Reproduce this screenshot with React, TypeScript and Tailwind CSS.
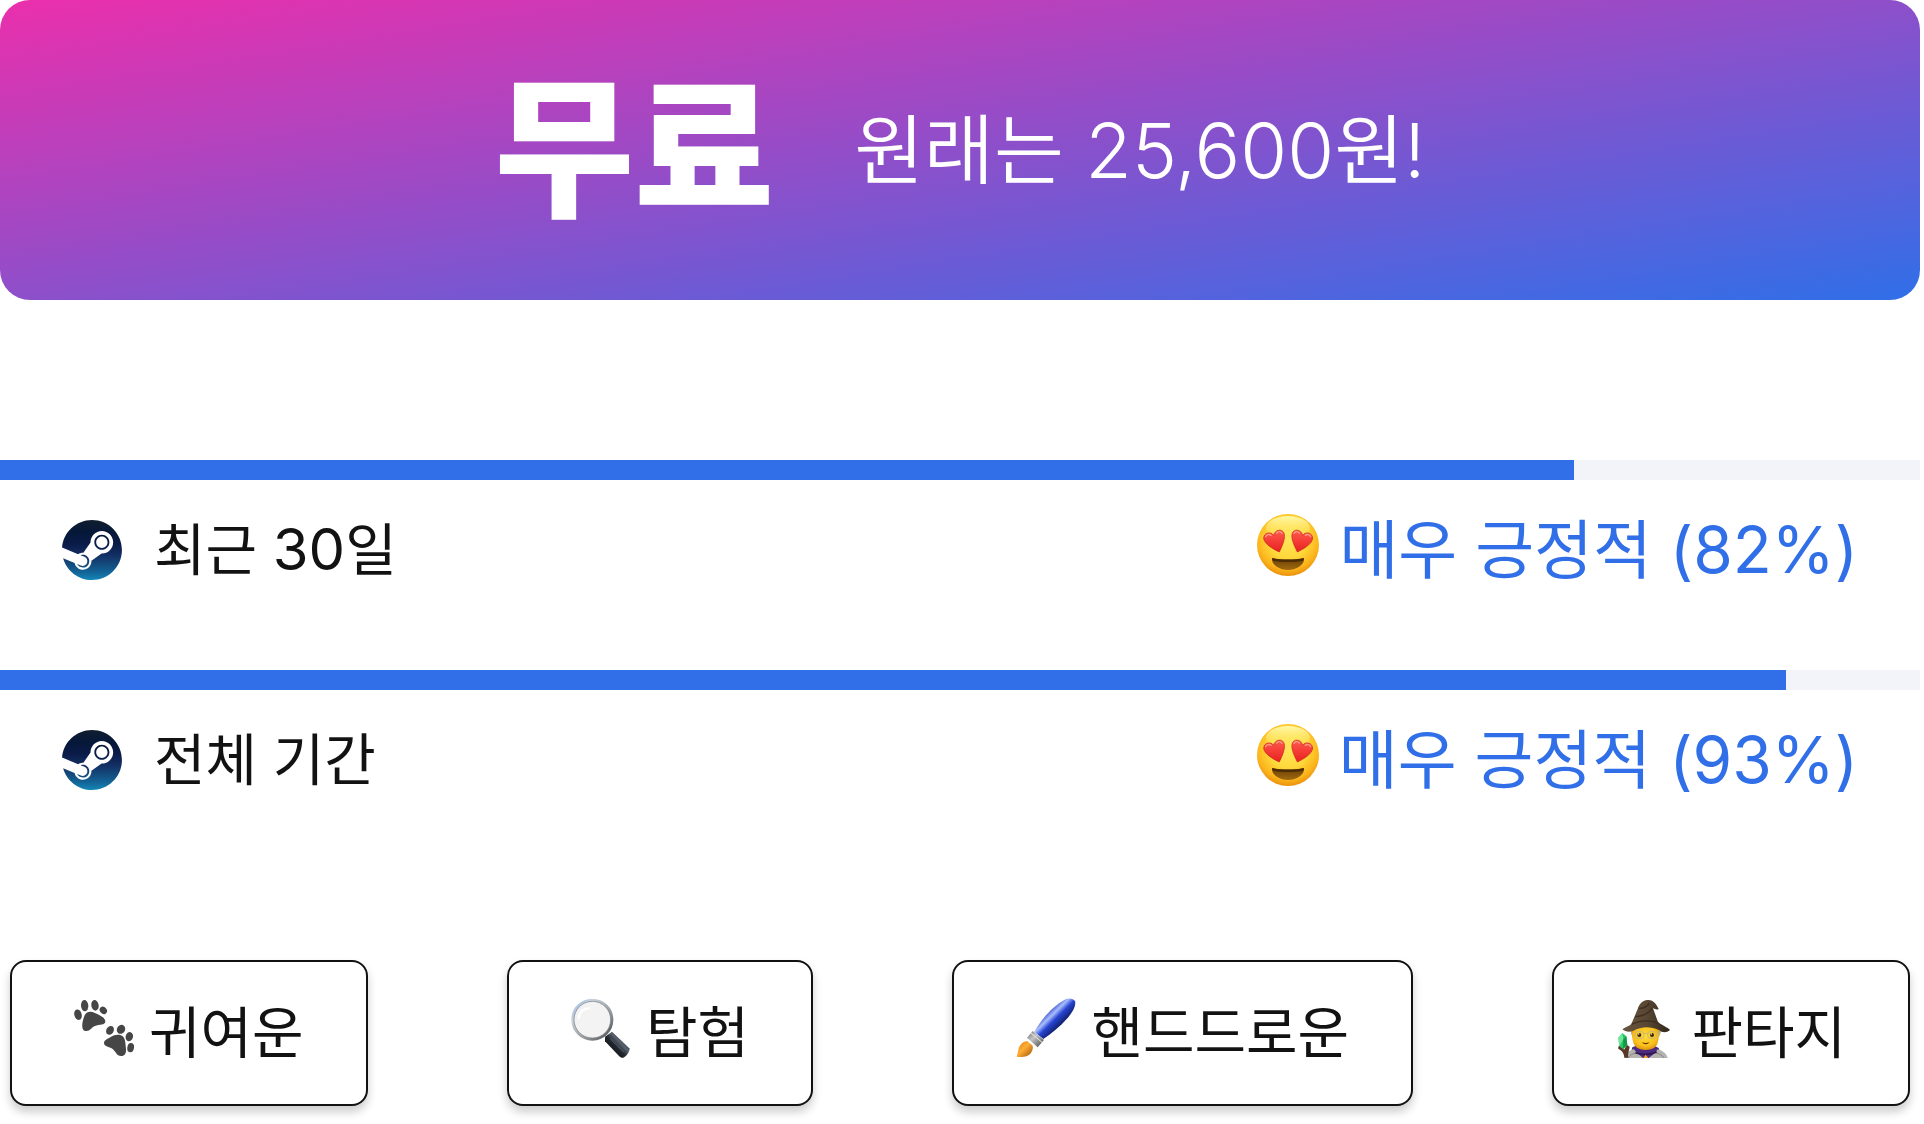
import type { ReactNode } from 'react';

type Review = { id: string; label: ReactNode; score: number };
type Tag = { name: string; icon: ReactNode };

function SteamIcon({ id }: { id: string }) {
  return (
    <svg viewBox="0 0 24 24" className="size-15 shrink-0" aria-hidden="true">
      <defs>
        <linearGradient id={id} x1="0" y1="0" x2="0" y2="1">
          <stop offset="0" stopColor="#111d2e" />
          <stop offset="0.21" stopColor="#051839" />
          <stop offset="0.4" stopColor="#0a1b48" />
          <stop offset="0.58" stopColor="#132e62" />
          <stop offset="0.74" stopColor="#144b7e" />
          <stop offset="0.87" stopColor="#136497" />
          <stop offset="1" stopColor="#1387b8" />
        </linearGradient>
      </defs>
      <path
        fill={`url(#${id})`}
        d="M11.979 0C5.678 0 .511 4.86.022 11.037l6.432 2.658c.545-.371 1.203-.59 1.912-.59.063 0 .125.004.188.006l2.861-4.142V8.91c0-2.495 2.028-4.524 4.524-4.524 2.494 0 4.524 2.031 4.524 4.527s-2.03 4.525-4.524 4.525h-.105l-4.076 2.911c0 .052.004.105.004.159 0 1.875-1.515 3.396-3.39 3.396-1.635 0-3.016-1.173-3.331-2.727L.436 15.27C1.862 20.307 6.486 24 11.979 24c6.627 0 11.999-5.373 11.999-12S18.605 0 11.979 0zM7.54 18.21l-1.473-.61c.262.543.714.999 1.314 1.25 1.297.539 2.793-.076 3.332-1.375.263-.63.264-1.319.005-1.949s-.75-1.121-1.377-1.383c-.624-.26-1.29-.249-1.878-.03l1.523.63c.956.4 1.409 1.5 1.009 2.455-.397.957-1.497 1.41-2.454 1.012H7.54zm11.415-9.303c0-1.662-1.353-3.015-3.015-3.015-1.665 0-3.015 1.353-3.015 3.015 0 1.665 1.35 3.015 3.015 3.015 1.663 0 3.015-1.35 3.015-3.015zm-5.273-.005c0-1.252 1.013-2.266 2.265-2.266 1.249 0 2.266 1.014 2.266 2.266 0 1.251-1.017 2.265-2.266 2.265-1.253 0-2.265-1.014-2.265-2.265z"
      />
    </svg>
  );
}

function HeartEyesIcon({ id }: { id: string }) {
  return (
    <svg viewBox="0 0 186 216" className="h-18 w-[62px] shrink-0" aria-hidden="true">
      <defs>
        <radialGradient id={`${id}-face`} cx="0.5" cy="0.4" r="0.62">
          <stop offset="0" stopColor="#ffe65c" />
          <stop offset="0.5" stopColor="#ffd83b" />
          <stop offset="0.8" stopColor="#fbb51b" />
          <stop offset="1" stopColor="#e88a0c" />
        </radialGradient>
        <linearGradient id={`${id}-shine`} x1="0" y1="0" x2="0" y2="1">
          <stop offset="0" stopColor="#fffbb0" stopOpacity="0.95" />
          <stop offset="1" stopColor="#ffe65c" stopOpacity="0" />
        </linearGradient>
        <linearGradient id={`${id}-heart`} x1="0" y1="0" x2="0" y2="1">
          <stop offset="0" stopColor="#ff5a4e" />
          <stop offset="1" stopColor="#e8201f" />
        </linearGradient>
        <linearGradient id={`${id}-mouth`} x1="0" y1="0" x2="0" y2="1">
          <stop offset="0" stopColor="#6b3f05" />
          <stop offset="1" stopColor="#a06a10" />
        </linearGradient>
      </defs>
      <circle cx="93" cy="93" r="93" fill={`url(#${id}-face)`} />
      <ellipse cx="93" cy="42" rx="66" ry="36" fill={`url(#${id}-shine)`} />
      <g fill={`url(#${id}-heart)`} stroke="#c4231b" strokeWidth="2" strokeLinejoin="round">
        <path d="M67 114C54 108 22 92 20 73C20 56 42 51 50 64C54 45 79 43 82 61C85 78 72 103 67 114Z" />
        <path d="M121 114C134 108 165 92 167 73C167 56 145 51 137 64C133 45 108 43 105 61C102 78 116 103 121 114Z" />
      </g>
      <g fill="none" stroke="#ff9c8c" strokeWidth="4" strokeLinecap="round">
        <path d="M26 68C29 61 37 60 42 64M59 57C64 51 72 52 75 58" />
        <path d="M111 58C114 52 122 51 127 57M145 64C150 60 158 61 161 68" />
      </g>
      <path
        d="M45 132C70 138 116 138 141 132C144 150 121 168 93 168C65 168 42 150 45 132Z"
        fill={`url(#${id}-mouth)`}
      />
      <path d="M45 132C70 138 116 138 141 132L138 140C116 145 70 145 48 140Z" fill="#4b2c06" />
    </svg>
  );
}

function PawIcon() {
  return (
    <svg viewBox="222 174 180 210" className="h-[70px] w-15 shrink-0" aria-hidden="true">
      <g fill="#464646">
        <path d="M248 266C244 254 250 236 254 226C259 215 272 213 283 218C295 223 315 231 316 244C316 257 297 253 285 258C274 262 271 273 259 273C253 273 250 271 248 266Z" />
        <ellipse cx="234" cy="224" rx="11" ry="16" transform="rotate(-15 234 224)" />
        <ellipse cx="254" cy="197" rx="11" ry="17" transform="rotate(-5 254 197)" />
        <ellipse cx="285" cy="196" rx="11" ry="16" transform="rotate(-10 285 196)" />
        <ellipse cx="310" cy="211" rx="10" ry="12" transform="rotate(-40 310 211)" />
        <path d="M312 309C312 300 324 296 333 290C343 284 358 281 367 288C377 296 376 311 378 326C379 339 375 348 363 348C350 348 347 333 337 326C328 320 312 320 312 309Z" />
        <ellipse cx="330" cy="271" rx="11" ry="14" transform="rotate(30 330 271)" />
        <ellipse cx="363" cy="268" rx="12" ry="14" transform="rotate(35 363 268)" />
        <ellipse cx="388" cy="290" rx="11" ry="14" transform="rotate(15 388 290)" />
        <ellipse cx="392" cy="323" rx="10" ry="14" transform="rotate(10 392 323)" />
      </g>
    </svg>
  );
}

function MagnifierIcon() {
  return (
    <svg viewBox="243 174 180 210" className="h-[70px] w-15 shrink-0" aria-hidden="true">
      <defs>
        <linearGradient id="lens-rim" x1="0" y1="0" x2="1" y2="1">
          <stop offset="0" stopColor="#8fb8ea" />
          <stop offset="0.25" stopColor="#c9d3dc" />
          <stop offset="0.7" stopColor="#8b8f92" />
          <stop offset="1" stopColor="#3e4245" />
        </linearGradient>
        <linearGradient id="lens-handle" x1="0" y1="1" x2="1" y2="0">
          <stop offset="0" stopColor="#050607" />
          <stop offset="0.45" stopColor="#23272e" />
          <stop offset="0.6" stopColor="#59626e" />
          <stop offset="1" stopColor="#0b0d10" />
        </linearGradient>
      </defs>
      <path d="M345 290L366 275L418 325C421 333 409 350 400 353C395 354 391 352 387 348L345 304Z" fill="url(#lens-handle)" />
      <path d="M362 296L400 334" stroke="#454d58" strokeWidth="5" strokeLinecap="round" />
      <circle cx="307" cy="239" r="59" fill="#f3f3f3" stroke="url(#lens-rim)" strokeWidth="8" />
      <circle cx="307" cy="239" r="55" fill="none" stroke="#6f7375" strokeWidth="2" />
      <path d="M266 235C268 216 280 206 297 204" fill="none" stroke="#fff" strokeWidth="6" strokeLinecap="round" />
    </svg>
  );
}

function BrushIcon() {
  return (
    <svg viewBox="256 174 180 210" className="h-[70px] w-15 shrink-0" aria-hidden="true">
      <defs>
        <linearGradient id="brush-handle" x1="0.3" y1="0.3" x2="0.65" y2="0.65">
          <stop offset="0" stopColor="#1d39b8" />
          <stop offset="0.35" stopColor="#a9bdff" />
          <stop offset="0.6" stopColor="#2745d2" />
          <stop offset="1" stopColor="#10206f" />
        </linearGradient>
        <linearGradient id="brush-ferrule" x1="0" y1="0" x2="1" y2="1">
          <stop offset="0" stopColor="#696969" />
          <stop offset="0.4" stopColor="#c5c5c5" />
          <stop offset="1" stopColor="#3f3f3f" />
        </linearGradient>
        <linearGradient id="brush-tip" x1="0" y1="0" x2="1" y2="1">
          <stop offset="0" stopColor="#d97a08" />
          <stop offset="0.45" stopColor="#ffae35" />
          <stop offset="1" stopColor="#9c5000" />
        </linearGradient>
      </defs>
      <path d="M311 276C330 240 365 199 402 179C414 173 428 175 433 184C437 196 426 216 410 235C388 260 364 280 338 297Z" fill="url(#brush-handle)" />
      <path d="M289 293L306 273L340 300L321 322Z" fill="url(#brush-ferrule)" />
      <path d="M301 279L334 307" stroke="#eee" strokeWidth="3" />
      <path d="M289 303C274 305 265 317 263 331L258 350C272 353 295 351 302 337C307 328 308 321 305 316Z" fill="url(#brush-tip)" />
    </svg>
  );
}

function MageIcon() {
  return (
    <svg viewBox="256 174 180 210" className="h-[70px] w-15 shrink-0" aria-hidden="true">
      <defs>
        <linearGradient id="mage-hat" x1="0" y1="0" x2="1" y2="0">
          <stop offset="0" stopColor="#69563f" />
          <stop offset="0.5" stopColor="#594733" />
          <stop offset="1" stopColor="#33271b" />
        </linearGradient>
        <radialGradient id="mage-face" cx="0.5" cy="0.4" r="0.6">
          <stop offset="0" stopColor="#ffdc39" />
          <stop offset="0.7" stopColor="#fac01c" />
          <stop offset="1" stopColor="#dc920c" />
        </radialGradient>
      </defs>
      <path d="M297 354L305 322L320 316H368L384 324L394 354Z" fill="#4c2a80" />
      <path d="M281 354C286 340 297 330 310 328C318 340 328 346 337 354ZM354 354C363 348 374 340 381 328C396 332 408 341 411 354Z" fill="#b4b3b0" />
      <path d="M292 354C298 345 306 341 314 339M400 354C394 345 386 341 377 339" fill="none" stroke="#85847f" strokeWidth="3" />
      <path d="M314 338C332 345 359 345 378 336" fill="none" stroke="#2e174f" strokeWidth="5" />
      <path d="M338 354L345 344L353 354Z" fill="#ff9d23" />
      <path d="M300 267H311V296C302 288 299 279 300 267ZM381 267H391C392 280 387 290 379 296Z" fill="#a9b7b4" />
      <path d="M303 260H385C386 288 384 310 374 321C360 333 330 333 316 321C305 310 303 288 303 260Z" fill="url(#mage-face)" />
      <circle cx="326" cy="285" r="6" fill="#3c260c" />
      <circle cx="364" cy="285" r="6" fill="#3c260c" />
      <circle cx="324" cy="282" r="2" fill="#fff" />
      <circle cx="362" cy="282" r="2" fill="#fff" />
      <g fill="none" stroke="#c5b77c" strokeWidth="3">
        <rect x="313" y="275" width="27" height="20" rx="8" />
        <rect x="351" y="275" width="27" height="20" rx="8" />
        <path d="M340 282C343 279 348 279 351 282" />
      </g>
      <path d="M334 307C341 310 349 310 356 307C353 315 338 315 334 307Z" fill="#5f3407" />
      <path d="M275 268C281 262 296 258 302 252L321 207C326 191 337 180 350 180C363 178 375 187 384 207C378 211 372 206 367 205L382 246C394 256 411 262 418 270C407 279 395 279 385 270C357 258 331 260 307 273C296 277 284 276 275 268Z" fill="url(#mage-hat)" />
      <path d="M303 253C328 240 359 241 383 249M314 230C333 229 355 220 365 206M324 205C337 206 350 199 357 189" fill="none" stroke="#3c2e20" strokeWidth="4" />
      <path d="M263 320C268 313 276 323 280 329L289 315L297 320C296 331 291 337 293 353H281C280 340 273 330 263 327Z" fill="#573825" />
      <path d="M263 293L275 279L287 289L290 316L277 327L266 319Z" fill="#2bc765" />
      <path d="M263 293L275 279L278 298L266 319Z" fill="#70e89a" />
      <path d="M278 298L287 289L290 316L277 327Z" fill="#139a49" />
    </svg>
  );
}

const reviews: Review[] = [
  {
    id: 'recent',
    label: (
      <>
        최근 <span className="text-[58px] leading-none">30</span>일
      </>
    ),
    score: 82,
  },
  { id: 'all', label: '전체 기간', score: 93 },
];

const tags: Tag[] = [
  { name: '귀여운', icon: <PawIcon /> },
  { name: '탐험', icon: <MagnifierIcon /> },
  { name: '핸드드로운', icon: <BrushIcon /> },
  { name: '판타지', icon: <MageIcon /> },
];

function PriceBanner() {
  return (
    <header className="flex items-center justify-center gap-20 rounded-[30px] bg-[linear-gradient(to_bottom_right,#eb2fac,#306fe8)] py-[60px] text-white">
      <strong className="text-[152px] leading-[180px] font-extrabold">무료</strong>
      <p className="text-[76px] leading-[96px] font-[350]">원래는 25,600원!</p>
    </header>
  );
}

function ReviewRow({ review }: { review: Review }) {
  return (
    <section>
      <div
        role="progressbar"
        aria-valuenow={review.score}
        aria-valuemin={0}
        aria-valuemax={100}
        aria-labelledby={review.id}
        className="h-5 bg-[#f3f4f9]"
      >
        <div className="h-full bg-[#306fe8]" style={{ width: `${review.score}%` }} />
      </div>
      <div className="flex items-center justify-between px-[62px] pt-5">
        <div className="flex items-center gap-8">
          <SteamIcon id={`steam-${review.id}`} />
          <span id={review.id} className="text-[56px] leading-[100px]">
            {review.label}
          </span>
        </div>
        <div className="flex items-center gap-5 text-[#306fe8]">
          <HeartEyesIcon id={`face-${review.id}`} />
          <span className="text-[64px] leading-[100px]">매우 긍정적 ({review.score}%)</span>
        </div>
      </div>
    </section>
  );
}

export default function App() {
  return (
    <main className="bg-white pr-1 pb-[18px] font-[Inter,'Noto_Sans_CJK_KR',sans-serif] text-[#121212]">
      <PriceBanner />

      {/* 평가 */}
      <div className="mt-40 flex flex-col gap-[70px]">
        {reviews.map((review) => (
          <ReviewRow key={review.id} review={review} />
        ))}
      </div>

      {/* 태그 */}
      <div className="mt-[150px] flex justify-between px-2.5">
        {tags.map((tag) => (
          <button
            key={tag.name}
            type="button"
            className="flex items-center gap-[15px] rounded-2xl border-2 border-[#121212] bg-white px-[62px] py-[31px] text-[56px] leading-[80px] shadow-[0_6px_10px_rgba(0,0,0,0.2)]"
          >
            {tag.icon}
            {tag.name}
          </button>
        ))}
      </div>
    </main>
  );
}
